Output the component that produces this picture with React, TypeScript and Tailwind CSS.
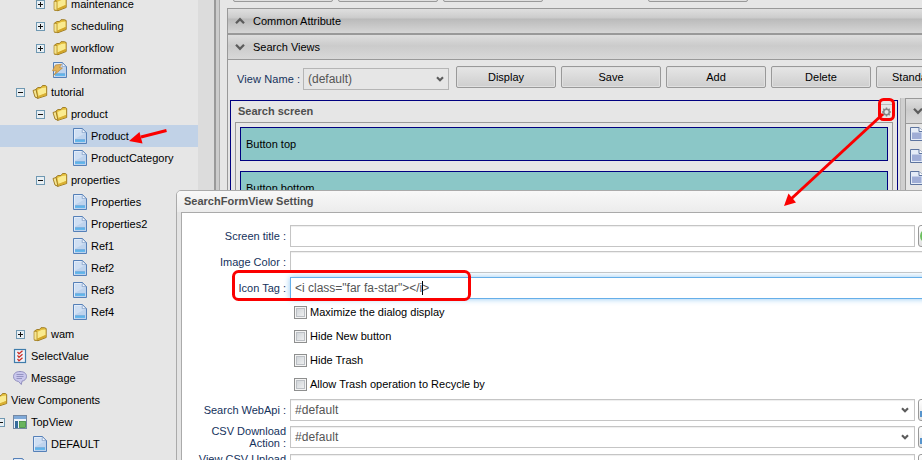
import React from "react";

type IconName = "folder" | "open" | "doc" | "info" | "check" | "message" | "view";

function TreeIcon({ name }: { name: IconName }) {
  if (name === "folder")
    return (
      <svg width="16" height="16" viewBox="0 0 16 16" className="shrink-0">
        <path d="M2.500 5 L5 3.500 H7.500 L9 1.700 H12.500 L14.200 2.500 V11.500 L6 14.700 L2.500 14.200Z" fill="#e3bd3c" stroke="#9a761c" strokeWidth=".9" />
        <path d="M2 5.300 L5 5.600 V14.500 L2 13.700Z" fill="#f6e591" stroke="#a98422" strokeWidth=".7" />
        <path d="M5.600 5.800 L9.500 4 L13.500 3.500 V9 L5.600 12.500Z" fill="#f9ea8e" />
        <path d="M5.600 12.500 L13.500 9 V11.300 L5.600 14Z" fill="#d2a52a" />
      </svg>
    );
  if (name === "open")
    return (
      <svg width="16" height="16" viewBox="0 0 16 16" className="shrink-0">
        <path d="M4 5 L6 3.500 H9 L10.500 1.500 H13.500 L14.700 2.500 V11.500 L6 14.300 L3.500 13Z" fill="#e3bd3c" stroke="#9a761c" strokeWidth=".9" />
        <path d="M1 6.500 L4 5.500 L6 14.300 L3 13Z" fill="#f6e591" stroke="#9a761c" strokeWidth=".9" />
        <path d="M5.500 6 L10 4 L14 3.500 V9 L6.500 12Z" fill="#faeb8f" />
        <path d="M6.300 12 L14 9 V11.200 L6.600 13.700Z" fill="#d9b034" />
      </svg>
    );
  if (name === "check")
    return (
      <svg width="16" height="16" viewBox="0 0 16 16" className="shrink-0">
        <rect x="2.500" y="1.500" width="11" height="13" fill="#eef3fa" stroke="#3f7cab" strokeWidth="1.200" />
        <path d="M5.500 3.800 L7 5.800 L10.500 2.800 M5.500 7.300 L7 9.300 L10.500 6.300 M5.500 10.800 L7 12.800 L10.500 9.800" fill="none" stroke="#cc3028" strokeWidth="1.300" />
      </svg>
    );
  if (name === "message")
    return (
      <svg width="16" height="16" viewBox="0 0 16 16" className="shrink-0">
        <path d="M8 1.500 C12 1.500 14.500 3.500 14.500 6.300 C14.500 9.200 12.500 10.600 10 11.200 L9.300 14.500 L6.500 11.500 C3.500 11 1.500 9.300 1.500 6.500 C1.500 3.500 4 1.500 8 1.500Z" fill="#c9c7ec" stroke="#9290bf" />
        <path d="M4.500 4.500H11.500M4.500 6.500H11.500M4.500 8.500H10" stroke="#8f8dbd" strokeWidth=".9" />
      </svg>
    );
  if (name === "view")
    return (
      <svg width="16" height="16" viewBox="0 0 16 16" className="shrink-0">
        <rect x="1.500" y="1.500" width="13" height="13" fill="#eef3fa" stroke="#7488a3" />
        <rect x="2" y="2" width="12" height="3" fill="#7fa9d8" />
        <rect x="3" y="7" width="3" height="7" fill="#356b9b" />
        <rect x="7.500" y="7.500" width="6" height="6" fill="#69b45f" stroke="#3f8a3c" strokeWidth=".8" />
      </svg>
    );
  return (
    <svg width="16" height="16" viewBox="0 0 16 16" className="shrink-0">
      <path d="M1.500 .5 H10.500 L14.500 4.500 V15.500 H1.500Z" fill="#bed3ed" stroke="#5580b8" />
      <path d="M2.500 1.500H9.500V5H13.500L2.500 11Z" fill="#cfdff3" />
      <path d="M2.500 14.500V1.500H10" fill="none" stroke="#e8f1fb" strokeWidth=".8" />
      <path d="M10.300 .8 V4.600 H14.200Z" fill="#f2f7fd" stroke="#7394c0" strokeWidth=".6" />
      <rect x="3" y="12" width="10" height="2" fill="#66b8ec" />
      <path d="M3 11.700H13" stroke="#4a9ad8" strokeWidth=".7" />
      {name === "info" && (
        <path d="M3.500 3 L9.500 2.300 L7.500 5.500 L10.500 6 L1.500 13.500 L4.500 9 L.5 8.700Z" fill="#e3b458" stroke="#b88740" strokeWidth=".7" />
      )}
    </svg>
  );
}

function Toggle({ open }: { open: boolean }) {
  return (
    <svg width="9" height="9" viewBox="0 0 9 9" className="shrink-0">
      <rect x=".5" y=".5" width="8" height="8" fill="#e9eff3" stroke="#6f98b2" />
      <path d={open ? "M2 4.500H7" : "M2 4.500H7M4.500 2V7"} stroke="#111" />
    </svg>
  );
}

interface Row {
  label: string;
  icon: IconName;
  pad: string;
  toggle?: "open" | "closed";
  selected?: boolean;
}

const rows: Row[] = [
  { label: "maintenance", icon: "folder", pad: "pl-[36px]", toggle: "closed" },
  { label: "scheduling", icon: "folder", pad: "pl-[36px]", toggle: "closed" },
  { label: "workflow", icon: "folder", pad: "pl-[36px]", toggle: "closed" },
  { label: "Information", icon: "info", pad: "pl-[52px]" },
  { label: "tutorial", icon: "open", pad: "pl-[16px]", toggle: "open" },
  { label: "product", icon: "open", pad: "pl-[36px]", toggle: "open" },
  { label: "Product", icon: "doc", pad: "pl-[72px]", selected: true },
  { label: "ProductCategory", icon: "doc", pad: "pl-[72px]" },
  { label: "properties", icon: "open", pad: "pl-[36px]", toggle: "open" },
  { label: "Properties", icon: "doc", pad: "pl-[72px]" },
  { label: "Properties2", icon: "doc", pad: "pl-[72px]" },
  { label: "Ref1", icon: "doc", pad: "pl-[72px]" },
  { label: "Ref2", icon: "doc", pad: "pl-[72px]" },
  { label: "Ref3", icon: "doc", pad: "pl-[72px]" },
  { label: "Ref4", icon: "doc", pad: "pl-[72px]" },
  { label: "wam", icon: "folder", pad: "pl-[16px]", toggle: "closed" },
  { label: "SelectValue", icon: "check", pad: "pl-[12px]" },
  { label: "Message", icon: "message", pad: "pl-[12px]" },
  { label: "View Components", icon: "open", pad: "pl-0 -ml-[8px]" },
  { label: "TopView", icon: "view", pad: "pl-0 -ml-[4px]", toggle: "open" },
  { label: "DEFAULT", icon: "doc", pad: "pl-[32px]" },
  { label: "", icon: "doc", pad: "pl-[12px]" },
];

function Tree() {
  return (
    <aside className="h-[460px] w-[198px] shrink-0 overflow-hidden bg-[#e6e6e6]">
      <div className="-mt-[7px]">
        {rows.map((r, i) => (
          <div key={i} className={r.selected ? "h-[22px] bg-[#c1d2e7]" : "h-[22px]"}>
            <div className={`flex h-[22px] items-center ${r.pad}`}>
              {r.toggle && (
                <span className="mr-[7px]">
                  <Toggle open={r.toggle === "open"} />
                </span>
              )}
              <TreeIcon name={r.icon} />
              <span className="ml-[3px] text-black">{r.label}</span>
            </div>
          </div>
        ))}
      </div>
    </aside>
  );
}

function Chevron({ up, small }: { up?: boolean; small?: boolean }) {
  return (
    <svg width={small ? 8 : 10} height={small ? 6 : 8} viewBox="0 0 10 8" className="shrink-0">
      <path
        d={up ? "M1 6.300 L5 2.200 L9 6.300" : "M1 1.700 L5 5.800 L9 1.700"}
        fill="none"
        stroke="#5c5c5c"
        strokeWidth={small ? 2.8 : 2.2}
      />
    </svg>
  );
}

function Btn({ children, start }: { children?: React.ReactNode; start?: boolean }) {
  return (
    <div
      className={`flex h-[22px] w-[100px] shrink-0 items-center rounded-[2px] border border-[#999] bg-linear-to-b from-[#e6e6e6] to-[#cecece] text-black shadow-[inset_0_0_0_1px_#e0e0e0] ${
        start ? "justify-start pl-[15px]" : "justify-center"
      }`}
    >
      {children}
    </div>
  );
}

function SideDoc() {
  return (
    <svg width="14" height="14" viewBox="0 0 14 14">
      <path d="M.5 .5H9L13 4.500V13.500H.5Z" fill="#e5ecf7" stroke="#5d749f" />
      <path d="M9 .5V4.500H13" fill="#fff" stroke="#5d749f" />
      <rect x="2" y="5.500" width="9.500" height="6.500" fill="#9fadd6" />
    </svg>
  );
}

function Gear() {
  return (
    <svg width="13" height="15" viewBox="0 0 13 15" className="shrink-0">
      <path d="M0 .5H13" stroke="#bbb" />
      <circle cx="6.500" cy="8" r="2.800" fill="none" stroke="#858585" strokeWidth="1.500" />
      <path
        d="M6.500 3.500v2M6.500 10.500v2M2 8h2M9 8h2M3.300 4.800l1.400 1.400M8.300 9.800l1.400 1.400M3.300 11.200l1.400-1.400M8.300 6.200l1.400-1.400"
        stroke="#858585"
        strokeWidth="1.500"
      />
    </svg>
  );
}

function Editor() {
  return (
    <main className="h-[460px] min-w-0 flex-1 overflow-hidden bg-[#e6e6e6]">
      <div className="-mt-[20px] flex h-[28px] w-[800px] gap-[5px] pl-[11px]">
        <Btn />
        <Btn />
        <Btn />
        <div className="w-[95px]" />
        <Btn />
      </div>
      <div className="ml-[5px] w-[800px] border-l border-t border-[#999]">
        <div className="flex h-[24px] items-center bg-[linear-gradient(#dfdfdf_0%,#cdcdcd_35%,#bbb_43%,#d6d6d6_100%)] pl-[7px] text-black">
          <Chevron up />
          <span className="ml-[8px]">Common Attribute</span>
        </div>
        <div className="flex h-[27px] items-center border-b border-t-2 border-[#999] bg-[linear-gradient(#dedede_0%,#cbcbcb_45%,#d8d8d8_100%)] pl-[7px] text-black">
          <Chevron />
          <span className="ml-[8px]">Search Views</span>
        </div>
        <div className="flex h-[38px] pl-[9px] pt-[6px]">
          <span className="mt-[6px] w-[66px] shrink-0 whitespace-nowrap leading-[14px] tracking-[0.1px] text-[#15325c]">View Name :</span>
          <div className="mt-[2px] flex h-[22px] w-[146px] shrink-0 items-center justify-between border border-[#b5b5b5] pl-[4px] pr-[4px] text-[12px] text-[#555]">
            <span>(default)</span>
            <Chevron small />
          </div>
          <div className="ml-[7px] flex gap-[5px]">
            <Btn>Display</Btn>
            <Btn>Save</Btn>
            <Btn>Add</Btn>
            <Btn>Delete</Btn>
            <Btn start>Standard</Btn>
          </div>
        </div>
        <div className="flex">
          <section className="ml-[2px] mt-[2px] h-[360px] w-[668px] border border-[#000080] pl-[4px] pr-[4px]">
            <div className="flex h-[21px] items-center justify-between pl-[3px] text-[11px] font-bold text-[#4f4f4f]">
              Search screen
              <Gear />
            </div>
            <div className="h-[338px] border border-[#999] p-[4px]">
              <div className="flex h-[34px] items-center border border-[#000080] bg-[#8bc7c7] pl-[5px] text-black">Button top</div>
              <div className="mt-[10px] flex h-[34px] items-center border border-[#000080] bg-[#8bc7c7] pl-[5px] text-black">Button bottom</div>
            </div>
          </section>
          <div className="ml-[2px] h-[360px] w-[5px] border-l border-[#bbb] bg-[#cfcfcf]" />
          <div className="h-[360px] w-[60px] border-l border-t border-[#999]">
            <div className="flex h-[25px] items-center border-b border-[#999] bg-[linear-gradient(#dedede_0%,#cbcbcb_45%,#d8d8d8_100%)] pl-[7px]">
              <Chevron />
            </div>
            <div className="flex flex-col gap-[8px] pl-[4px] pt-[3px]">
              <SideDoc />
              <SideDoc />
              <SideDoc />
            </div>
          </div>
        </div>
      </div>
    </main>
  );
}

function Label({ children }: { children: React.ReactNode }) {
  return <div className="w-[105px] shrink-0 whitespace-pre-line text-right leading-[12px] text-[#15325c]">{children}</div>;
}

function MiniButton({ green }: { green?: boolean }) {
  return (
    <div className="ml-[3px] flex h-[22px] w-[22px] shrink-0 items-center rounded-[3px] border border-[#999] bg-linear-to-b from-white to-[#e2e2e2] pl-[1px]">
      {green ? (
        <div className="h-[14px] w-[14px] rounded-full border-2 border-[#6cc05f] bg-[#a5dd9d]" />
      ) : (
        <div className="mt-[7px] h-[6px] w-[14px] bg-[#5794cc]" />
      )}
    </div>
  );
}

function SelectRow({ label, value }: { label: string; value: string }) {
  return (
    <div className="flex h-[22px] items-center">
      <Label>{label}</Label>
      <div className="ml-[4px] flex h-[22px] w-[625px] shrink-0 items-center justify-between border border-[#c5c5c5] bg-white pl-[4px] pr-[5px] text-[12px] text-[#555] shadow-[inset_0_1px_1px_#eee]">
        <span className="tracking-[0.1px]">{value}</span>
        <Chevron small />
      </div>
      <MiniButton />
    </div>
  );
}

function Dialog() {
  return (
    <div className="absolute left-[176px] top-[190px] h-[290px] w-[800px] rounded-tl-[5px] border border-[#aaa] bg-[#e4e4e4] pl-[4px]">
      <div className="-ml-[4px] flex h-[21px] items-center rounded-tl-[4px] bg-linear-to-b from-[#f8f8f8] to-[#ececec] pl-[7px] text-[11px] font-bold text-[#4f4f4f]">
        SearchFormView Setting
      </div>
      <div className="h-[270px] border-l border-t border-[#aaa] bg-white pt-[12px]">
        <div className="-ml-[1px] flex flex-col gap-[4px]">
          <div className="flex h-[22px] items-center">
            <Label>Screen title :</Label>
            <div className="ml-[4px] h-[22px] w-[625px] border border-[#c5c5c5] shadow-[inset_0_1px_1px_#eee]" />
            <MiniButton green />
          </div>
          <div className="flex h-[22px] items-center">
            <Label>Image Color :</Label>
            <div className="ml-[4px] h-[22px] w-[660px] border border-[#c5c5c5] shadow-[inset_0_1px_1px_#eee]" />
          </div>
          <div className="flex h-[22px] items-center">
            <Label>Icon Tag :</Label>
            <div className="ml-[4px] flex h-[22px] w-[660px] items-center border border-[#66afe9] bg-white pl-[4px] text-[12px] text-[#555] shadow-[0_0_6px_#8fc6f2]">
              <span>{'<i class="far fa-star"></i'}</span>
              <span className="-mr-[1px] h-[14px] w-px bg-black" />
              <span>{">"}</span>
            </div>
          </div>
        </div>
        <div className="ml-[112px] mt-[1px] text-black">
          {["Maximize the dialog display", "Hide New button", "Hide Trash", "Allow Trash operation to Recycle by"].map((t) => (
            <div key={t} className="flex h-[24px] items-center">
              <span className="h-[13px] w-[13px] border border-[#8e8f8f] bg-[linear-gradient(135deg,#c9ced3,#f6f6f6)] shadow-[inset_0_0_0_1px_#f4f4f4,inset_0_0_0_2px_#bcc0c5]" />
              <span className="ml-[3px]">{t}</span>
            </div>
          ))}
        </div>
        <div className="-ml-[1px] mt-[3px] flex flex-col gap-[5px]">
          <SelectRow label="Search WebApi :" value="#default" />
          <SelectRow label={"CSV Download\nAction :"} value="#default" />
          <div className="mt-[1px]">
            <SelectRow label={"View CSV Upload\nAction :"} value="" />
          </div>
        </div>
      </div>
    </div>
  );
}

function Annotations() {
  return (
    <svg className="absolute left-0 top-0" width="922" height="460" viewBox="0 0 922 460" fill="none">
      <g stroke="#fb0000" fill="none">
        <path d="M166.500 130.500 L141 137" strokeWidth="3" />
        <path d="M883 114 L791 199" strokeWidth="3" />
        <rect x="879.500" y="99.500" width="14" height="20" rx="4" strokeWidth="3" />
        <rect x="233.500" y="271.500" width="236" height="28" rx="5" strokeWidth="3" />
      </g>
      <path d="M129 141 L139.500 132 L142.500 143.500Z" fill="#fb0000" />
      <path d="M784 206 L788.500 193.500 L796 202.500Z" fill="#fb0000" />
    </svg>
  );
}

export default function App() {
  return (
    <div className="relative flex h-[460px] w-[922px] overflow-hidden bg-[#e6e6e6] font-['Liberation_Sans',Arial,sans-serif] text-[11px]">
      <Tree />
      <div className="h-[460px] w-[16px] shrink-0 bg-[#dcdcdc]" />
      <div className="h-[460px] w-[8px] shrink-0 bg-[linear-gradient(90deg,#999_0,#999_2px,#ccc_2px,#ccc_5px,#aaa_5px,#aaa_6px,#e6e6e6_6px)]" />
      <Editor />
      <Dialog />
      <Annotations />
    </div>
  );
}
